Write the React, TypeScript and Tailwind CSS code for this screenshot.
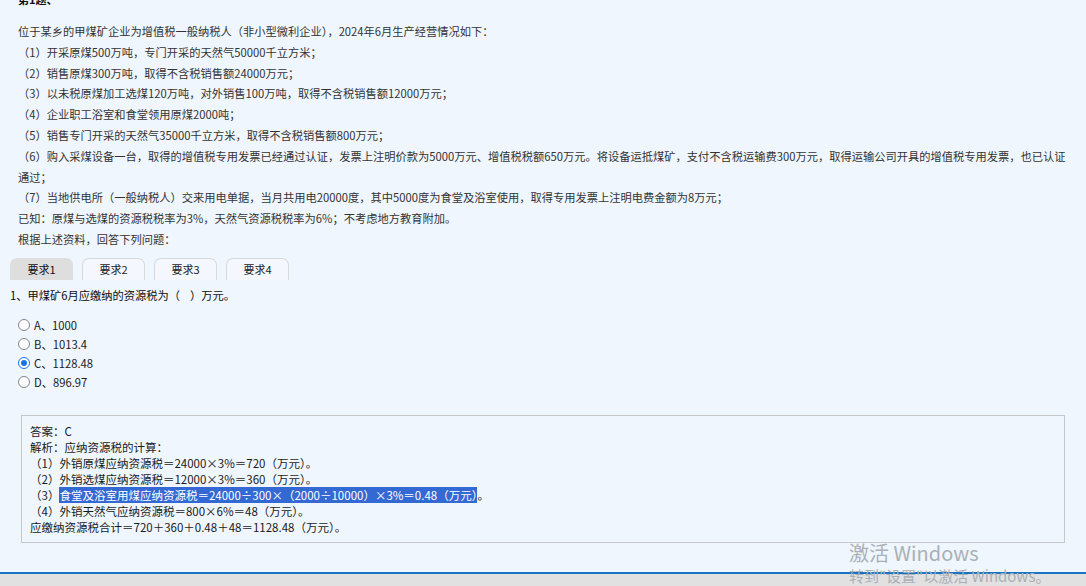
const lines = [
  '（1）开采原煤500万吨，专门开采的天然气50000千立方米；',
  '（2）销售原煤300万吨，取得不含税销售额24000万元；',
  '（3）以未税原煤加工选煤120万吨，对外销售100万吨，取得不含税销售额12000万元；',
  '（4）企业职工浴室和食堂领用原煤2000吨；',
  '（5）销售专门开采的天然气35000千立方米，取得不含税销售额800万元；',
  '（6）购入采煤设备一台，取得的增值税专用发票已经通过认证，发票上注明价款为5000万元、增值税税额650万元。将设备运抵煤矿，支付不含税运输费300万元，取得运输公司开具的增值税专用发票，也已认证通过；',
  '（7）当地供电所（一般纳税人）交来用电单据，当月共用电20000度，其中5000度为食堂及浴室使用，取得专用发票上注明电费金额为8万元；',
];

const options = [
  { key: 'A', text: '1000' },
  { key: 'B', text: '1013.4' },
  { key: 'C', text: '1128.48', checked: true },
  { key: 'D', text: '896.97' },
];

const tabs = ['要求1', '要求2', '要求3', '要求4'];

const Radio = ({ checked }: { checked?: boolean }) => (
  <span
    className={
      checked
        ? 'flex h-[12px] w-[12px] items-center justify-center rounded-full border border-[#1a73e8] bg-white'
        : 'h-[12px] w-[12px] rounded-full border border-[#858585] bg-white'
    }
  >
    {checked && <span className="h-[6px] w-[6px] rounded-full bg-[#1a73e8]" />}
  </span>
);

export default function App() {
  return (
    <div className="relative flex h-[586px] w-[1086px] flex-col overflow-hidden bg-[#eff6fe] font-['Noto_Sans_CJK_SC','Microsoft_YaHei',sans-serif] text-[11px] text-[#333]">
      <div className="flex-1 overflow-hidden">
        <div className="-mt-[11px] px-[18px] font-bold leading-[21px] text-[#111]">第1题、</div>

        <div className="mt-[11px] pl-[18px] pr-[14px] text-[11.25px] leading-[20.8px]">
          <p>位于某乡的甲煤矿企业为增值税一般纳税人（非小型微利企业），2024年6月生产经营情况如下：</p>
          {lines.map((l) => (
            <p key={l}>{l}</p>
          ))}
          <p>已知：原煤与选煤的资源税税率为3%，天然气资源税税率为6%；不考虑地方教育附加。</p>
          <p>根据上述资料，回答下列问题：</p>
        </div>

        <div className="mt-[8px] flex gap-[9px] px-[10px]">
          {tabs.map((t, i) => (
            <div
              key={t}
              className={
                i === 0
                  ? 'flex h-[22px] w-[63px] items-center justify-center rounded-t-[7px] bg-[#dedede] text-[#111]'
                  : 'flex h-[22px] w-[63px] items-center justify-center rounded-t-[7px] border border-b-0 border-[#d9d9d9] bg-[#f4f8fe] text-[#222]'
              }
            >
              {t}
            </div>
          ))}
        </div>

        <div className="mt-[5px] px-[10px] text-[11.25px] leading-[21px] text-[#0d0d0d]">1、甲煤矿6月应缴纳的资源税为（&nbsp;&nbsp;&nbsp;&nbsp;）万元。</div>

        <div className="mt-[10px] flex flex-col px-[18px] text-[11.25px] text-[#1a1a1a]">
          {options.map((o) => (
            <label key={o.key} className="flex h-[19px] items-center gap-[4px]">
              <Radio checked={o.checked} />
              <span>
                {o.key}、{o.text}
              </span>
            </label>
          ))}
        </div>

        <div className="mx-[21px] mt-[23px] h-[128px] border border-[#c8c8c8] px-[8px] py-[7px] text-[11.5px] leading-[16px] text-[#1a1a1a]">
          <p>答案：C</p>
          <p>解析：应纳资源税的计算：</p>
          <p>（1）外销原煤应纳资源税＝24000×3%＝720（万元）。</p>
          <p>（2）外销选煤应纳资源税＝12000×3%＝360（万元）。</p>
          <p>
            （3）
            <span className="bg-[#3468d3] text-white">食堂及浴室用煤应纳资源税＝24000÷300×（2000÷10000）×3%＝0.48（万元）</span>。
          </p>
          <p>（4）外销天然气应纳资源税＝800×6%＝48（万元）。</p>
          <p>应缴纳资源税合计＝720＋360＋0.48＋48＝1128.48（万元）。</p>
        </div>
      </div>

      <div className="h-[14px] border-t-2 border-[#1873c4] bg-[#e1e1e1]" />

      <div className="pointer-events-none absolute left-[849px] top-[540px] text-[#aab0b6]">
        <div className="text-[20px] leading-[26px]">激活 Windows</div>
        <div className="text-[15px] leading-[20px]">转到"设置"以激活 Windows。</div>
      </div>
    </div>
  );
}
